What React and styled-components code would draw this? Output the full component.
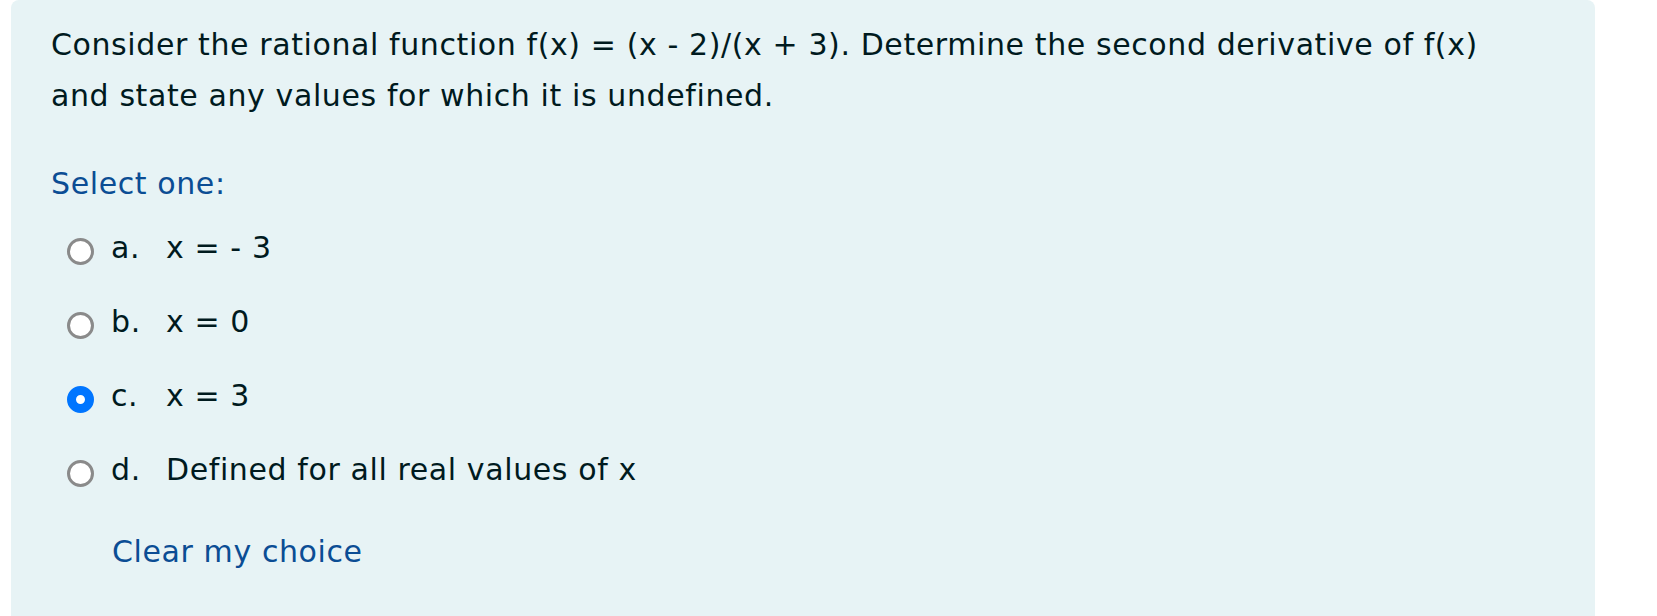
import React, { useState } from 'react'
import styled, { createGlobalStyle } from 'styled-components'

const GlobalStyle = createGlobalStyle`
  html, body {
    margin: 0;
    padding: 0;
    background: #ffffff;
    overflow: hidden;
  }
  body {
    font-family: "DejaVu Sans", Inter, sans-serif;
    letter-spacing: 0.6px;
    color: #001a1e;
  }
`

const Page = styled.div`
  padding-left: 11px;
  width: 1584px;
`

const Formulation = styled.div`
  background: #e7f3f5;
  border-radius: 8px 8px 0 0;
  min-height: 640px;
  padding: 19px 40px 0 40px;
  box-sizing: border-box;
`

const QText = styled.p`
  margin: 0;
  max-width: 1465px;
  font-size: 30px;
  line-height: 51px;
`

const Prompt = styled.div`
  margin-top: 37px;
  font-size: 30px;
  line-height: 51px;
  color: #0b4d94;
`

const Answers = styled.div`
  margin-top: 13px;
  display: flex;
  flex-direction: column;
  gap: 23px;
`

const Option = styled.label`
  display: flex;
  align-items: flex-start;
  font-size: 30px;
  line-height: 51px;
  cursor: pointer;
`

const Radio = styled.span`
  flex: none;
  width: 27px;
  height: 27px;
  margin: 16px 17px 0 16px;
  box-sizing: border-box;
  border-radius: 50%;
  background: #ffffff;
  border: ${p => (p.$checked ? '9px solid #0075ff' : '3px solid #8a8a8a')};
`

const Letter = styled.span`
  width: 55px;
  flex: none;
`

const ClearLink = styled.a`
  display: inline-block;
  margin: 31px 0 0 61px;
  font-size: 30px;
  line-height: 51px;
  color: #0b4d94;
  text-decoration: none;
  cursor: pointer;
`

const options = [
  { key: 'a', text: 'x = - 3' },
  { key: 'b', text: 'x = 0' },
  { key: 'c', text: 'x = 3' },
  { key: 'd', text: 'Defined for all real values of x' }
]

const App = () => {
  const [selected, setSelected] = useState('c')

  return (
    <Page>
      <GlobalStyle />
      <Formulation>
        <QText>
          Consider the rational function f(x) = (x - 2)/(x + 3). Determine the second derivative of f(x)
          and state any values for which it is undefined.
        </QText>
        <Prompt>Select one:</Prompt>
        <Answers>
          {options.map(opt => (
            <Option key={opt.key} onClick={() => setSelected(opt.key)}>
              <Radio $checked={selected === opt.key} />
              <Letter>{opt.key}.</Letter>
              <span>{opt.text}</span>
            </Option>
          ))}
        </Answers>
        <ClearLink onClick={() => setSelected(null)}>Clear my choice</ClearLink>
      </Formulation>
    </Page>
  )
}

export default App
